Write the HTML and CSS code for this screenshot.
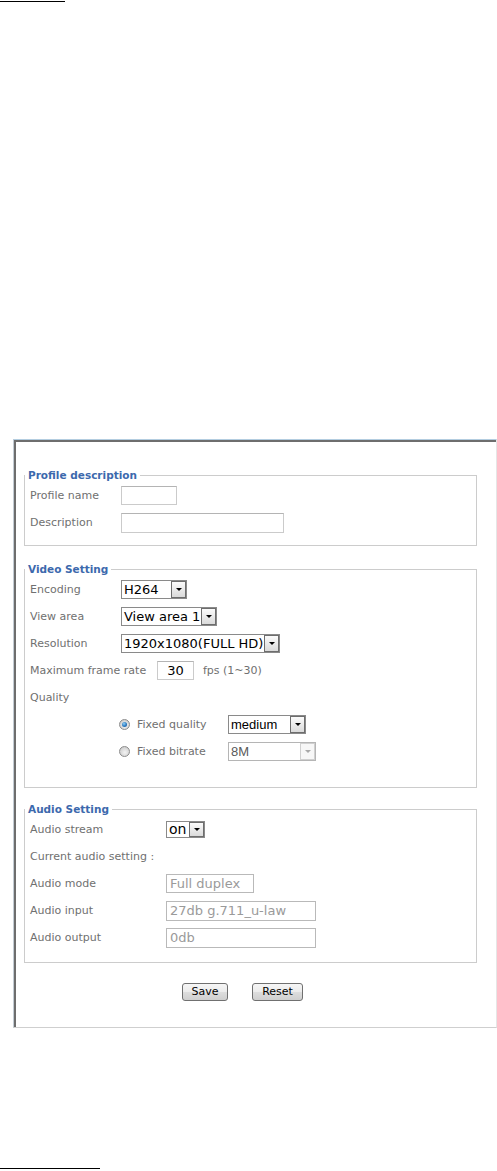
FILE: index.html
```html
<!DOCTYPE html>
<html>
<head>
<meta charset="utf-8">
<link rel="stylesheet" href="styles.css">
</head>
<body>
<div class="rule rule-top"></div>
<div class="frame">
  <div class="screen">
    <fieldset class="group g-profile">
      <legend>Profile description</legend>
      <div class="row"><span class="lbl">Profile name</span><span class="txt w-pname"></span></div>
      <div class="row"><span class="lbl">Description</span><span class="txt w-desc"></span></div>
    </fieldset>

    <fieldset class="group g-video">
      <legend>Video Setting</legend>
      <div class="row"><span class="lbl">Encoding</span><span class="sel w-enc"><span class="sel-val">H264</span><span class="sel-btn"></span></span></div>
      <div class="row"><span class="lbl">View area</span><span class="sel w-view"><span class="sel-val">View area 1</span><span class="sel-btn"></span></span></div>
      <div class="row"><span class="lbl">Resolution</span><span class="sel w-res"><span class="sel-val">1920x1080(FULL HD)</span><span class="sel-btn"></span></span></div>
      <div class="row"><span class="lbl lbl-fr">Maximum frame rate</span><span class="txt w-fr">30</span><span class="note">fps (1~30)</span></div>
      <div class="row"><span class="lbl">Quality</span></div>
      <div class="row row-radio"><span class="radio checked"></span><span class="rlbl">Fixed quality</span><span class="sel sel-arial w-med"><span class="sel-val">medium</span><span class="sel-btn"></span></span></div>
      <div class="row row-radio"><span class="radio"></span><span class="rlbl">Fixed bitrate</span><span class="sel sel-arial sel-dis w-bit"><span class="sel-val">8M</span><span class="sel-btn"></span></span></div>
    </fieldset>

    <fieldset class="group g-audio">
      <legend>Audio Setting</legend>
      <div class="row"><span class="lbl lbl-au">Audio stream</span><span class="sel sel-big w-on"><span class="sel-val">on</span><span class="sel-btn"></span></span></div>
      <div class="row"><span class="lbl">Current audio setting :</span></div>
      <div class="row"><span class="lbl lbl-au">Audio mode</span><span class="txt txt-ro w-amode">Full duplex</span></div>
      <div class="row"><span class="lbl lbl-au">Audio input</span><span class="txt txt-ro w-ain">27db g.711_u-law</span></div>
      <div class="row"><span class="lbl lbl-au">Audio output</span><span class="txt txt-ro w-ain">0db</span></div>
    </fieldset>

    <div class="actions">
      <button class="btn w-save">Save</button>
      <button class="btn w-reset">Reset</button>
    </div>
  </div>
</div>
<div class="rule rule-bottom"></div>
</body>
</html>
```

FILE: styles.css
```css
html, body {
  margin: 0;
  padding: 0;
  background: #fff;
  overflow: hidden;
}
body {
  width: 497px;
  height: 1171px;
  font-family: "DejaVu Sans", sans-serif;
}
.rule {
  height: 1px;
  background: #000;
}
.rule-top {
  width: 65px;
  margin-top: 1px;
}
.rule-bottom {
  width: 100px;
  margin-top: 140px;
}
.frame {
  margin-top: 437px;
  margin-left: 13px;
  width: 484px;
  box-sizing: border-box;
  border-top: 1px solid #b3cde0;
  border-left: 1px solid #c3ccd4;
  border-right: 1px solid #e6e6e6;
  border-bottom: 1px solid #cfcfcf;
  background: #fff;
}
.screen {
  border-top: 2px solid #6e6e6e;
  border-left: 2px solid #6e6e6e;
  height: 587px;
  box-sizing: border-box;
  padding-top: 27px;
}
.group {
  margin: 0 0 0 8px;
  padding: 0;
  width: 453px;
  box-sizing: border-box;
  min-width: 0;
  border: 1px solid #cccccc;
}
.group legend {
  padding: 0 3px;
  margin: 0;
  font-size: 10.5px;
  line-height: 13px;
  font-weight: bold;
  color: #3c69ad;
}
.g-profile { padding-bottom: 9px; }
.g-video { margin-top: 17px; padding-bottom: 22px; }
.g-audio { margin-top: 15px; padding-bottom: 11px; }

.row {
  height: 27px;
  display: flex;
  align-items: center;
  padding-left: 5px;
  font-size: 11px;
  color: #707070;
}
.lbl {
  width: 91px;
  flex: none;
  white-space: nowrap;
}
.lbl-fr { width: 127px; }
.lbl-au { width: 136px; }

.txt {
  display: inline-flex;
  align-items: center;
  box-sizing: border-box;
  height: 19px;
  border: 1px solid #cbcbcb;
  border-top-color: #b4b4b4;
  background: #fff;
  font-size: 13px;
  color: #000;
}
.w-pname { width: 56px; }
.w-desc { width: 163px; height: 20px; }
.w-fr { width: 37px; justify-content: center; }
.txt-ro {
  color: #9a9a9a;
  padding-left: 3px;
  border-color: #b9b9b9;
}
.w-amode { width: 88px; }
.w-ain { width: 150px; height: 20px; }
.note {
  margin-left: 9px;
}

.sel {
  display: inline-flex;
  align-items: stretch;
  box-sizing: border-box;
  height: 19px;
  border: 1px solid #8a8a8a;
  background: #fff;
  color: #000;
  font-size: 13px;
}
.sel-val {
  flex: 1;
  padding-left: 2px;
  line-height: 17px;
  white-space: nowrap;
}
.sel-btn {
  flex: none;
  width: 15px;
  box-sizing: border-box;
  border: 1px solid #6d6d6d;
  background: linear-gradient(#fbfbfb, #dadada);
  display: flex;
  align-items: center;
  justify-content: center;
}
.sel-btn::after {
  content: "";
  width: 0;
  height: 0;
  border-left: 3px solid transparent;
  border-right: 3px solid transparent;
  border-top: 3px solid #000;
}
.w-enc { width: 66px; }
.w-view { width: 96px; }
.w-res { width: 159px; }
.w-med { width: 78px; }
.w-bit { width: 88px; }
.w-on { width: 39px; height: 17px; }
.sel-big .sel-val { line-height: 15px; font-size: 14px; }
.sel-arial .sel-val {
  font-family: "Liberation Sans", Arial, sans-serif;
  font-size: 13px;
}
.sel-dis {
  border-color: #b5b5b5;
}
.sel-dis .sel-val { color: #5a5a5a; }
.sel-dis .sel-btn {
  border-color: #d0d0d0;
  background: #f7f7f7;
}
.sel-dis .sel-btn::after { border-top-color: #a8a8a8; }

.row-radio { padding-left: 94px; }
.radio {
  flex: none;
  width: 11px;
  height: 11px;
  box-sizing: border-box;
  border-radius: 50%;
  border: 1px solid #8c8c8c;
  background: radial-gradient(circle at 55% 60%, #f4f4f4 0%, #d6d6d6 60%, #bdbdbd 100%);
  display: flex;
  align-items: center;
  justify-content: center;
}
.radio.checked::after {
  content: "";
  width: 5px;
  height: 5px;
  border-radius: 50%;
  background: radial-gradient(circle at 40% 35%, #8fd0f5 0%, #2a78c0 55%, #1a4f8c 100%);
}
.rlbl {
  margin-left: 7px;
  width: 91px;
  flex: none;
}

.actions {
  display: flex;
  margin-top: 20px;
  padding-left: 166px;
  gap: 24px;
}
.btn {
  height: 18px;
  box-sizing: border-box;
  border: 1px solid #707070;
  border-radius: 3px;
  background: linear-gradient(#f6f6f6 0%, #ebebeb 50%, #dddddd 51%, #cfcfcf 100%);
  font-family: "DejaVu Sans", sans-serif;
  font-size: 11px;
  color: #000;
  padding: 0;
  line-height: 16px;
}
.w-save { width: 46px; }
.w-reset { width: 51px; }
```
